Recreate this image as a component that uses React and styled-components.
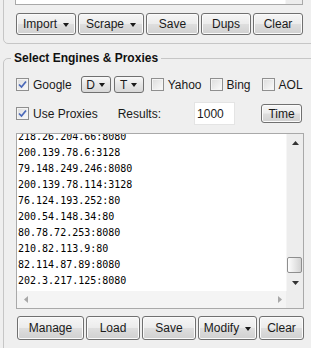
import React from 'react';
import styled, { createGlobalStyle } from 'styled-components';

const Global = createGlobalStyle`
  *, *::before, *::after { box-sizing: border-box; }
  html, body { margin: 0; padding: 0; background: #efefef; }
  body {
    font-family: "Liberation Sans", Arial, sans-serif;
    font-size: 12px;
    color: #1a1a1a;
  }
`;

const Screen = styled.div`
  width: 311px;
  height: 348px;
  overflow: hidden;
  background: #efefef;
`;

const TopPanel = styled.div`
  margin: -30px 0 0 3px;
  width: 330px;
  border: 1px solid #c6c6c6;
  border-radius: 5px;
  padding: 0 0 8px 11px;
  display: flex;
  flex-direction: column;
  gap: 8px;
`;

const TextBox = styled.div`
  width: 288px;
  height: ${p => p.h}px;
  border: 1px solid #a9a9a9;
  background: #fff;
  display: grid;
  grid-template-columns: 1fr 17px;
  grid-template-rows: ${p => (p.hbar ? '1fr 17px' : '1fr')};
  overflow: hidden;
`;

const VTrack = styled.div`
  background: #ededed;
  border-left: 1px solid #f6f6f6;
  display: flex;
  flex-direction: column;
`;

const ArrowCell = styled.div`
  height: 17px;
  flex: none;
  display: flex;
  align-items: center;
  justify-content: center;
`;

const TrackFill = styled.div`
  flex: 1;
  display: flex;
  flex-direction: column;
  justify-content: flex-end;
  padding-bottom: 1px;
`;

const Thumb = styled.div`
  width: 15px;
  height: 16px;
  border: 1px solid #8e8e8e;
  border-radius: 2px;
  background: linear-gradient(to right, #fdfdfd, #e4e4e4 60%, #d2d2d2);
`;

const HTrack = styled.div`
  background: #f4f4f4;
  display: flex;
  align-items: center;
  justify-content: space-between;
  padding: 0 4px 0 7px;
`;

const Corner = styled.div`
  background: #ededed;
`;

const ButtonRow = styled.div`
  display: flex;
  gap: 2px;
  margin-left: 1px;
  margin-top: ${p => p.mt || 0}px;
`;

const Button = styled.button`
  width: ${p => p.w}px;
  height: ${p => p.h || 22}px;
  flex: none;
  margin-left: ${p => p.ml || 0}px;
  padding: 0;
  border: 1px solid #707070;
  border-radius: 3px;
  background: linear-gradient(#f6f6f6 0%, #ececec 48%, #dedede 52%, #d0d0d0 100%);
  box-shadow: inset 0 0 0 1px #fbfbfb;
  font-family: "Liberation Sans", Arial, sans-serif;
  font-size: 12px;
  color: #1a1a1a;
  display: flex;
  align-items: center;
  justify-content: center;
  gap: 6px;
`;

const Caret = styled.span`
  width: 0;
  height: 0;
  border-left: 3.5px solid transparent;
  border-right: 3.5px solid transparent;
  border-top: 4px solid #1a1a1a;
  margin-top: 1px;
`;

const Group = styled.fieldset`
  margin: 7px 0 0 3px;
  width: 330px;
  border: 1px solid #c6c6c6;
  border-radius: 5px;
  padding: 0 0 30px 12px;
  min-width: 0;
`;

const Legend = styled.legend`
  font-weight: bold;
  font-size: 12px;
  line-height: 15px;
  padding: 0 3px;
  margin-left: -5px;
  color: #111;
`;

const OptionRow = styled.div`
  display: flex;
  align-items: center;
  height: ${p => p.h}px;
  margin-top: ${p => p.mt}px;
`;

const Check = styled.span`
  width: 13px;
  height: 13px;
  flex: none;
  border: 1px solid #8f8f8f;
  background: linear-gradient(135deg, #dcdcdc, #fbfbfb);
  box-shadow: inset 0 0 0 1px #f4f4f4;
  display: flex;
  align-items: center;
  justify-content: center;
`;

const Item = styled.label`
  display: flex;
  align-items: center;
  gap: 4px;
  margin-left: ${p => p.ml || 0}px;
  white-space: nowrap;
`;

const Text = styled.span`
  margin-left: ${p => p.ml || 0}px;
  white-space: nowrap;
`;

const Drop = styled.div`
  width: 30px;
  height: 17px;
  flex: none;
  margin-left: ${p => p.ml || 0}px;
  border: 1px solid #707070;
  border-radius: 3px;
  background: linear-gradient(#f9f9f9, #e6e6e6 50%, #d8d8d8);
  display: flex;
  align-items: center;
  justify-content: center;
  gap: 4px;
`;

const NumberBox = styled.div`
  width: 41px;
  height: 23px;
  flex: none;
  margin-left: ${p => p.ml || 0}px;
  background: #fff;
  border: 1px solid #e4e4e4;
  padding-left: 2px;
  display: flex;
  align-items: center;
`;

const ListWrap = styled.div`
  margin-top: 8px;
`;

const Lines = styled.div`
  overflow: hidden;
  font-family: "DejaVu Sans Mono", "Liberation Mono", monospace;
  font-size: 10px;
  line-height: 16px;
  color: #000;
  padding-left: 1px;
`;

const LinesInner = styled.div`
  margin-top: -5px;
`;

const Tri = ({ dir, color = '#333' }) => {
  const pts = {
    up: '0,4 3.5,0 7,4',
    down: '0,0 7,0 3.5,4',
    left: '4,0 4,7 0,3.5',
    right: '0,0 0,7 4,3.5',
  }[dir];
  const vert = dir === 'up' || dir === 'down';
  return (
    <svg width={vert ? 7 : 4} height={vert ? 4 : 7} viewBox={vert ? '0 0 7 4' : '0 0 4 7'}>
      <polygon points={pts} fill={color} />
    </svg>
  );
};

const CheckBox = ({ checked }) => (
  <Check>
    {checked && (
      <svg width="9" height="9" viewBox="0 0 9 9">
        <path d="M1 4.5 L3.5 7 L8 1.5" stroke="#4a68b8" strokeWidth="1.7" fill="none" />
      </svg>
    )}
  </Check>
);

const proxies = [
  '218.26.204.66:8080',
  '200.139.78.6:3128',
  '79.148.249.246:8080',
  '200.139.78.114:3128',
  '76.124.193.252:80',
  '200.54.148.34:80',
  '80.78.72.253:8080',
  '210.82.113.9:80',
  '82.114.87.89:8080',
  '202.3.217.125:8080',
];

export default function App() {
  return (
    <Screen>
      <Global />
      <TopPanel>
        <TextBox h={34}>
          <div />
          <VTrack />
        </TextBox>
        <ButtonRow>
          <Button w={60}>Import <Caret /></Button>
          <Button w={66}>Scrape <Caret /></Button>
          <Button w={53}>Save</Button>
          <Button w={50}>Dups</Button>
          <Button w={50}>Clear</Button>
        </ButtonRow>
      </TopPanel>

      <Group>
        <Legend>Select Engines &amp; Proxies</Legend>
        <OptionRow h={17} mt={10}>
          <Item><CheckBox checked /> Google</Item>
          <Drop ml={9}>D <Caret /></Drop>
          <Drop ml={3}>T <Caret /></Drop>
          <Item ml={7}><CheckBox /> Yahoo</Item>
          <Item ml={8}><CheckBox /> Bing</Item>
          <Item ml={11}><CheckBox /> AOL</Item>
        </OptionRow>
        <OptionRow h={23} mt={9}>
          <Item><CheckBox checked /> Use Proxies</Item>
          <Text ml={20}>Results:</Text>
          <NumberBox ml={33}>1000</NumberBox>
          <Button w={41} h={19} ml={26}>Time</Button>
        </OptionRow>
        <ListWrap>
          <TextBox h={176} hbar>
            <Lines>
              <LinesInner>
                {proxies.map(p => <div key={p}>{p}</div>)}
              </LinesInner>
            </Lines>
            <VTrack>
              <ArrowCell><Tri dir="up" /></ArrowCell>
              <TrackFill><Thumb /></TrackFill>
              <ArrowCell><Tri dir="down" /></ArrowCell>
            </VTrack>
            <HTrack>
              <Tri dir="left" color="#a8a8a8" />
              <Tri dir="right" color="#a8a8a8" />
            </HTrack>
            <Corner />
          </TextBox>
        </ListWrap>
        <ButtonRow mt={7}>
          <Button w={67} h={24}>Manage</Button>
          <Button w={54} h={24}>Load</Button>
          <Button w={54} h={24}>Save</Button>
          <Button w={59} h={24}>Modify <Caret /></Button>
          <Button w={45} h={24}>Clear</Button>
        </ButtonRow>
      </Group>
    </Screen>
  );
}
